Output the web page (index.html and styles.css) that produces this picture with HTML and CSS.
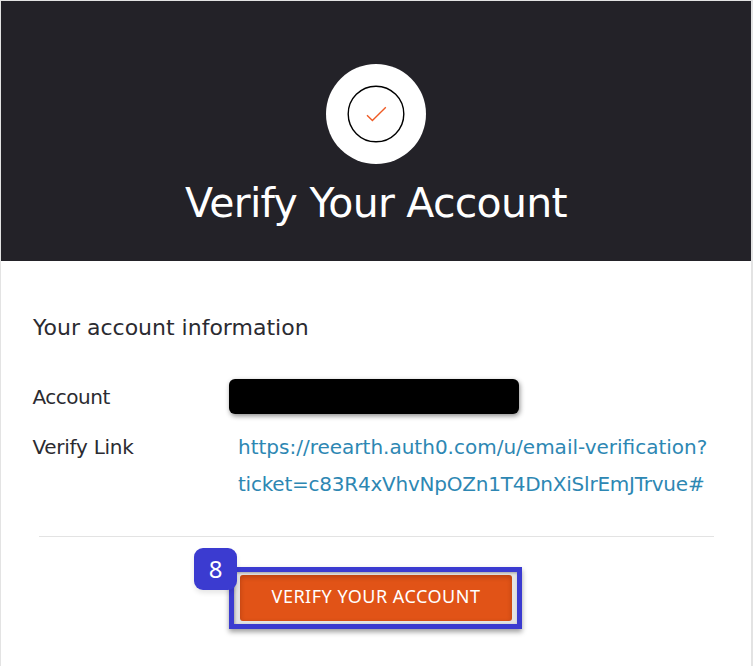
FILE: index.html
```html
<!DOCTYPE html>
<html lang="en">
<head>
<meta charset="utf-8">
<title>Verify Your Account</title>
<link rel="stylesheet" href="styles.css">
</head>
<body>
<main class="email">
  <header class="hero">
    <svg class="hero-icon" width="100" height="100" viewBox="0 0 100 100" aria-hidden="true">
      <circle cx="50" cy="50" r="50" fill="#fff"/>
      <circle cx="50" cy="50" r="27.8" fill="none" stroke="#000" stroke-width="1.4"/>
      <path d="M41 51.3 46.4 56.5 59.8 43.3" fill="none" stroke="#ef5a24" stroke-width="1.4"/>
    </svg>
    <h1 class="title">Verify Your Account</h1>
  </header>
  <section class="content">
    <h2 class="subtitle">Your account information</h2>
    <div class="row">
      <span class="label account">Account</span>
      <span class="redacted"></span>
    </div>
    <div class="row link-row">
      <span class="label verify">Verify Link</span>
      <a class="link">https://reearth.auth0.com/u/email-verification?<br><span class="ticket">ticket=c83R4xVhvNpOZn1T4DnXiSlrEmJTrvue#</span></a>
    </div>
    <hr class="rule">
    <div class="callout">
      <a class="button">VERIFY YOUR ACCOUNT</a>
      <span class="badge">8</span>
    </div>
  </section>
</main>
</body>
</html>
```
FILE: styles.css
```css
* { box-sizing: border-box; }
body {
  margin: 0;
  background: #fff;
  color: #2b2b31;
  font-family: "DejaVu Sans", sans-serif;
}
.email {
  height: 666px;
  overflow: hidden;
  border: solid #e3e3e3;
  border-width: 1px 2px 0 1px;
}
.hero {
  height: 260px;
  padding-top: 63px;
  background: #232228;
  text-align: center;
}
.hero-icon { display: block; margin: 0 auto; }
.title {
  margin: 14px 0 0;
  color: #fff;
  font-size: 41px;
  font-weight: 400;
  line-height: 50px;
  letter-spacing: -.72px;
  white-space: nowrap;
}
.content { padding: 49px 0 0 31px; }
.subtitle {
  margin: 0;
  padding-left: 1px;
  font-size: 22px;
  font-weight: 400;
  line-height: 36px;
  white-space: nowrap;
}
.row { display: flex; font-size: 20px; line-height: 37px; white-space: nowrap; }
.row:not(.link-row) { margin-top: 33px; }
.link-row { margin-top: 13px; }
.label { width: 206px; padding-left: .5px; }
.account { letter-spacing: -.5px; }
.verify { letter-spacing: -.28px; }
.redacted {
  width: 290px;
  height: 35px;
  margin: 0 0 0 -9px;
  border-radius: 6px;
  background: #000;
  box-shadow: 1px 2px 5px rgba(0, 0, 0, .45);
}
.row:not(.link-row) .redacted { margin-top: -.5px; }
.link { color: #2d87b3; }
.ticket { letter-spacing: -.23px; }
.rule {
  width: 675px;
  height: 1px;
  margin: 33px 0 0 7px;
  border: 0;
  background: #e3e3e3;
}
.callout {
  position: relative;
  width: 293px;
  height: 62px;
  margin: 30px 0 0 197px;
  padding: 3px 5px 3px 6px;
  border: 5px solid #3b3bd0;
  background: #e4e4e4;
  box-shadow: 0 3px 5px rgba(0, 0, 0, .38), inset 1px 1px 3px rgba(0, 0, 0, .3);
}
.button {
  display: block;
  height: 46px;
  border-radius: 3px;
  background: #e15317;
  box-shadow: inset 0 2px 5px rgba(80, 20, 0, .3);
  color: #fff;
  font: 18px/43px "Noto Sans", sans-serif;
  letter-spacing: .5px;
  text-align: center;
  white-space: nowrap;
}
.badge {
  position: absolute;
  left: -40px;
  top: -24px;
  width: 43px;
  height: 42px;
  border-radius: 9px;
  background: #3b3bd0;
  box-shadow: 0 3px 5px rgba(0, 0, 0, .1);
  color: #fff;
  font: 24px/41px "Noto Sans", sans-serif;
  text-align: center;
}
```
